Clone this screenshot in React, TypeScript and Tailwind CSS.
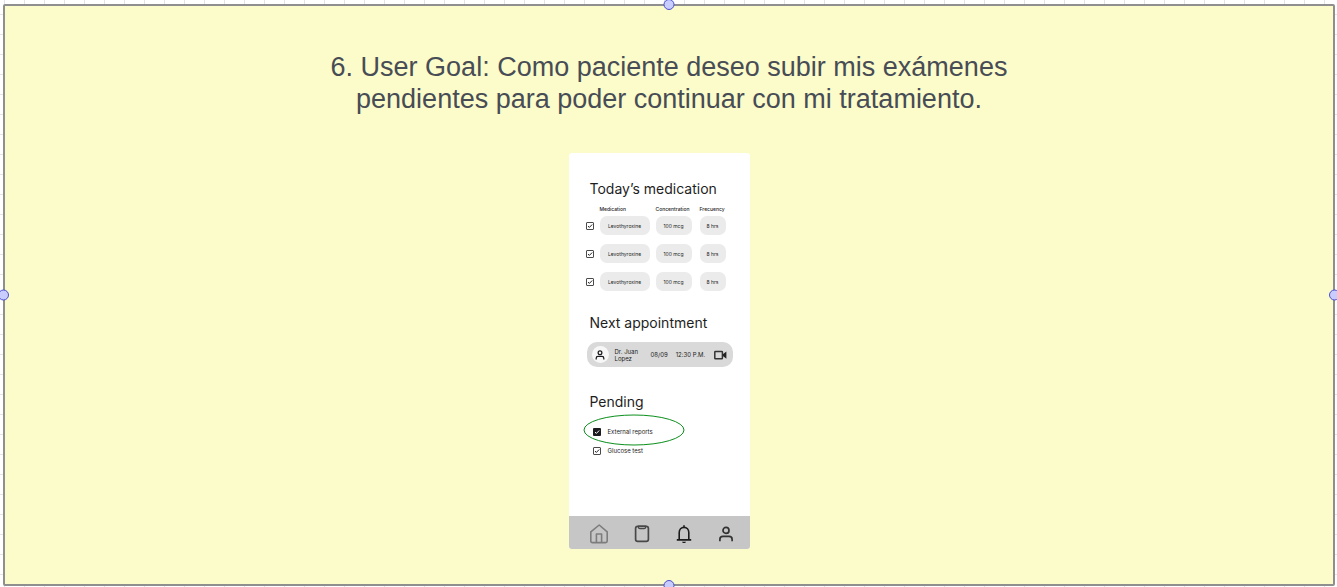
import React from "react";

const medications = [
  { name: "Levothyroxine", dose: "100 mcg", frequency: "8 hrs" },
  { name: "Levothyroxine", dose: "100 mcg", frequency: "8 hrs" },
  { name: "Levothyroxine", dose: "100 mcg", frequency: "8 hrs" },
];

function CheckBox({ id, label, filled = false }: { id: string; label?: string; filled?: boolean }) {
  return (
    <span className="grid size-2 shrink-0 place-items-center">
      <input
        id={id}
        type="checkbox"
        defaultChecked
        aria-label={label}
        className={
          filled
            ? "peer col-start-1 row-start-1 size-2 appearance-none rounded-[1px] bg-[#1c1b1f]"
            : "peer col-start-1 row-start-1 size-2 appearance-none rounded-[1px] border border-[#4a4a4a] bg-white"
        }
      />
      <svg
        viewBox="0 0 8 8"
        fill="none"
        strokeWidth="1"
        className={
          filled
            ? "pointer-events-none invisible col-start-1 row-start-1 size-2 stroke-white peer-checked:visible"
            : "pointer-events-none invisible col-start-1 row-start-1 size-2 stroke-[#222222] peer-checked:visible"
        }
      >
        <path d="M2 4.1 3.4 5.4 6.2 2.5" />
      </svg>
    </span>
  );
}

function PersonIcon({ className }: { className: string }) {
  return (
    <svg viewBox="0 0 16 16" fill="none" stroke="currentColor" className={className}>
      <circle cx="8" cy="4.4" r="3" />
      <path d="M1.9 15.2v-2c0-1.800 1.200-2.900 3-2.900h6.200c1.800 0 3 1.100 3 2.900v2" />
    </svg>
  );
}

function Pill({ children }: { children: React.ReactNode }) {
  return (
    <div className="flex h-[19px] items-center justify-center rounded-[7px] bg-[#ebebeb] whitespace-nowrap">
      {children}
    </div>
  );
}

function Heading({ children }: { children: React.ReactNode }) {
  return <h2 className="pl-1 text-[14px] leading-5 whitespace-nowrap text-[#1e1e1e]">{children}</h2>;
}

function Phone() {
  return (
    <article className="mr-5 flex w-[181px] flex-col overflow-hidden rounded-[3px] bg-white font-['Inter',sans-serif] text-[#222222]">
      <div className="px-[17px] pt-[26px] pb-[60px]">
        <section>
          <Heading>Today’s medication</Heading>
          <table className="mt-[6px] table-fixed border-collapse text-[5px] leading-[8px]">
            <colgroup>
              <col className="w-[14px]" />
              <col className="w-[56px]" />
              <col className="w-[44px]" />
              <col className="w-[26px]" />
            </colgroup>
            <thead>
              <tr className="text-left">
                <td />
                <th className="p-0 pb-[3px] font-medium">Medication</th>
                <th className="p-0 pb-[3px] font-medium">Concentration</th>
                <th className="p-0 pb-[3px] font-medium">Frecuency</th>
              </tr>
            </thead>
            <tbody>
              {medications.map((m, i) => (
                <tr key={i}>
                  <td className="p-0 pb-[9px]">
                    <CheckBox id={`medication-${i}`} label={`${m.name} ${i + 1}`} />
                  </td>
                  <td className="p-0 pr-[6px] pb-[9px]">
                    <Pill>{m.name}</Pill>
                  </td>
                  <td className="p-0 pr-2 pb-[9px]">
                    <Pill>{m.dose}</Pill>
                  </td>
                  <td className="p-0 pb-[9px]">
                    <Pill>{m.frequency}</Pill>
                  </td>
                </tr>
              ))}
            </tbody>
          </table>
        </section>

        <section className="mt-[13px]">
          <Heading>Next appointment</Heading>
          <div className="mt-[9px] ml-px flex h-[25px] items-center rounded-[10px] bg-[#d9d9d9] pr-[6px] pl-[5px] text-[6px] leading-[7px]">
            <span className="grid size-[17px] place-items-center rounded-full bg-[#f7f7f7]">
              <PersonIcon className="size-[10px] stroke-2 text-[#1c1b1f]" />
            </span>
            <span className="ml-[6px] w-[30px]">Dr. Juan Lopez</span>
            <span className="ml-[6px]">08/09</span>
            <span className="ml-2 whitespace-nowrap">12:30 P.M.</span>
            <button type="button" aria-label="Video call" className="ml-auto">
              <svg viewBox="0 0 13 10" className="h-[10px] w-[13px]">
                <rect x="0.8" y="1.400" width="7.600" height="7.400" rx="0.600" fill="none" stroke="#333333" strokeWidth="1.500" />
                <path d="M8.800 4.200 12.400 1.500v7.200L8.800 6z" fill="#222222" />
              </svg>
            </button>
          </div>
        </section>

        <section className="mt-[25px]">
          <Heading>Pending</Heading>
          <ul className="mt-[15px] flex flex-col gap-[9px] pl-[7px] text-[6px] leading-[10px]">
            <li className="relative flex items-center gap-[7px]">
              <CheckBox id="external-reports" filled />
              <label htmlFor="external-reports">External reports</label>
              <svg
                viewBox="0 0 102 32"
                className="pointer-events-none absolute -top-[13px] -left-[10px] h-8 w-[102px]"
                fill="none"
                stroke="#0b8f1c"
              >
                <ellipse cx="51" cy="16" rx="50" ry="15" />
              </svg>
            </li>
            <li className="flex items-center gap-[7px]">
              <CheckBox id="glucose-test" />
              <label htmlFor="glucose-test">Glucose test</label>
            </li>
          </ul>
        </section>
      </div>

      <nav className="flex h-[33px] items-center justify-between bg-[#c6c6c6] pt-[3px] pr-4 pl-5">
        <button type="button" aria-label="Home">
          <svg viewBox="0 0 20 20" fill="none" stroke="#7d7d7d" strokeWidth="1.6" strokeLinejoin="round" className="size-5">
            <path d="M1.8 17V7.8L10.2 1l8 6.8V17c0 1-.6 1.6-1.6 1.6H3.4c-1 0-1.6-.6-1.6-1.6z" />
            <path d="M7.4 18.4V10h5.2v8.4" />
          </svg>
        </button>
        <button type="button" aria-label="Reports">
          <svg viewBox="0 0 16 20" fill="none" stroke="#484848" strokeWidth="1.7" className="h-5 w-4">
            <rect x="1.6" y="2.4" width="12.8" height="15" rx="2.2" />
            <path d="M4.4 2h7.200v1.300c0 .9-.5 1.400-1.400 1.400H5.800c-.9 0-1.400-.5-1.400-1.400z" strokeWidth="1.2" />
          </svg>
        </button>
        <button type="button" aria-label="Notifications">
          <svg viewBox="0 0 18 20" fill="none" stroke="#1c1c1c" strokeWidth="1.6" className="h-5 w-[18px]">
            <path d="M4.2 15.800V8.600c0-3 2-5.200 4.800-5.200s4.800 2.200 4.800 5.200v7.200M1.800 15.900h14.400M9 1.200v2.200" />
            <path d="M7 17.700h4c-.3 1-1 1.400-2 1.400s-1.700-.4-2-1.400z" fill="#1c1c1c" stroke="none" />
          </svg>
        </button>
        <button type="button" aria-label="Profile">
          <PersonIcon className="size-4 stroke-[1.7px] text-[#333333]" />
        </button>
      </nav>
    </article>
  );
}

const handle = "absolute size-[11px] rounded-full border border-[#4a50d0] bg-[#c9ccff]";

export default function App() {
  return (
    <div className="flex min-h-screen overflow-hidden bg-white bg-[linear-gradient(to_right,#e4e4e8_1px,transparent_1px),linear-gradient(to_bottom,#e4e4e8_1px,transparent_1px)] bg-[size:20px_20px] bg-[position:4px_14px] pt-1 pr-[2px] pb-px pl-[3px]">
      <main className="relative flex flex-1 flex-col items-center rounded-[2px] border-2 border-[#8f8f8f] bg-[#fcfbca] px-6 pt-[45px] pb-[35px]">
        <h1 className="text-center font-['Liberation_Sans',Arial,sans-serif] text-[27px] leading-8 text-[#474c55]">
          6. User Goal: Como paciente deseo subir mis exámenes
          <br />
          pendientes para poder continuar con mi tratamiento.
        </h1>
        <div className="mt-[38px]">
          <Phone />
        </div>
        <span className={`${handle} -top-[7px] left-1/2 -translate-x-1/2`} />
        <span className={`${handle} -bottom-[7px] left-1/2 -translate-x-1/2`} />
        <span className={`${handle} top-1/2 -left-[7px] -translate-y-1/2`} />
        <span className={`${handle} top-1/2 -right-[7px] -translate-y-1/2`} />
      </main>
    </div>
  );
}
